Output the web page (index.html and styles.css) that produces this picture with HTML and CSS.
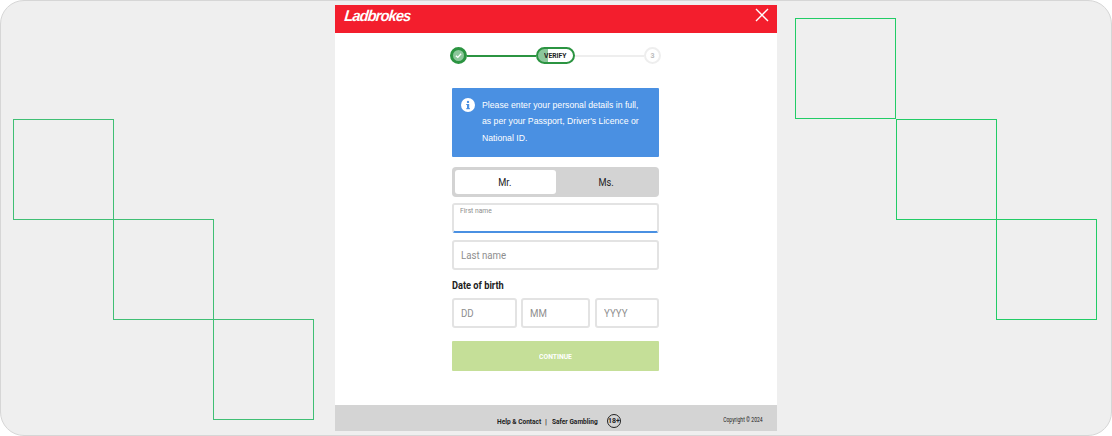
FILE: index.html
```html
<!DOCTYPE html>
<html lang="en">
<head>
    <meta charset="UTF-8">
    <meta name="viewport" content="width=device-width, initial-scale=1.0">
    <title>Ladbrokes - Verify</title>
    <link rel="stylesheet" href="styles.css">
</head>
<body>
    <div class="frame">
        <div class="square" style="left: 13px; top: 119px;"></div>
        <div class="square" style="left: 113px; top: 219px;"></div>
        <div class="square" style="left: 213px; top: 319px;"></div>
        <div class="square bright" style="left: 795px; top: 18px;"></div>
        <div class="square bright" style="left: 896px; top: 119px;"></div>
        <div class="square bright" style="left: 996px; top: 219px;"></div>

        <div class="modal">
            <header class="modal-header">
                <span class="logo">Ladbrokes</span>
                <svg class="close" width="14" height="14" viewBox="0 0 14 14">
                    <path d="M1 1L13 13M13 1L1 13" stroke="#fff" stroke-width="1.4" fill="none"/>
                </svg>
            </header>

            <div class="stepper">
                <div class="step-done">
                    <svg width="7" height="7" viewBox="0 0 8 8">
                        <path d="M1 4.2L3.2 6.2L7 2" stroke="#fff" stroke-width="1.5" fill="none"/>
                    </svg>
                </div>
                <div class="line line-done"></div>
                <div class="step-current"><span class="narrow">VERIFY</span></div>
                <div class="line"></div>
                <div class="step-next">3</div>
            </div>

            <div class="form">
                <div class="info-box">
                    <svg class="info-icon" width="14" height="14" viewBox="0 0 14 14">
                        <circle cx="7" cy="7" r="7" fill="#fff"/>
                        <rect x="6" y="6" width="2.2" height="5" fill="#4a90e2"/>
                        <rect x="5.2" y="6" width="2" height="1" fill="#4a90e2"/>
                        <rect x="5.2" y="10.2" width="3.8" height="1" fill="#4a90e2"/>
                        <circle cx="7" cy="3.9" r="1.2" fill="#4a90e2"/>
                    </svg>
                    <p>Please enter your personal details in full, as per your Passport, Driver's Licence or National ID.</p>
                </div>

                <div class="toggle">
                    <div class="toggle-item active"><span class="narrow">Mr.</span></div>
                    <div class="toggle-item"><span class="narrow">Ms.</span></div>
                </div>

                <div class="input focused">
                    <span class="float-label">First name</span>
                </div>
                <div class="input"><span class="narrow">Last name</span></div>

                <div class="dob-label"><span class="narrow">Date of birth</span></div>
                <div class="dob">
                    <div class="input dd"><span class="narrow">DD</span></div>
                    <div class="input mm"><span class="narrow">MM</span></div>
                    <div class="input yyyy"><span class="narrow">YYYY</span></div>
                </div>

                <button class="continue"><span class="narrow">CONTINUE</span></button>
            </div>

            <footer class="modal-footer">
                <span class="help">Help &amp; Contact</span>
                <span class="sep">|</span>
                <span class="safer">Safer Gambling</span>
                <span class="age">18+</span>
                <span class="copyright">Copyright © 2024</span>
            </footer>
        </div>
    </div>
</body>
</html>
```

FILE: styles.css
```css
* {
    box-sizing: border-box;
}
body {
    margin: 0;
    font-family: Roboto, sans-serif;
    overflow: hidden;
}
/* no condensed font installed, squeeze Roboto instead */
.narrow {
    display: inline-block;
    transform: scaleX(0.84);
}
.frame {
    position: relative;
    width: 1112px;
    height: 436px;
    background: #efefef;
    border: 1px solid #d6d6d6;
    border-radius: 24px;
    padding-top: 4px;
    display: flex;
    justify-content: center;
}
.square {
    position: absolute;
    width: 101px;
    height: 101px;
    margin: -1px 0 0 -1px;
    border: 1px solid #3fbf74;
}
.square.bright {
    border-color: #22cc66;
}
.modal {
    width: 442px;
    height: 426px;
    background: #fff;
    display: flex;
    flex-direction: column;
}
.modal-header {
    height: 28px;
    flex: none;
    background: #f31e2d;
    display: flex;
    justify-content: space-between;
    padding: 3px 8px 0 9px;
}
.logo {
    font-family: "Liberation Sans", sans-serif;
    font-size: 15.5px;
    line-height: 15px;
    font-style: italic;
    font-weight: bold;
    letter-spacing: -0.9px;
    color: #fff;
    transform: scaleX(0.94) skewX(-6deg);
    transform-origin: left;
}
.stepper {
    display: flex;
    align-items: center;
    margin: 14px 0 0 115px;
    width: 211px;
    height: 17px;
}
.step-done {
    width: 17px;
    height: 17px;
    flex: none;
    border-radius: 50%;
    background: #8cc79b;
    border: 3px solid #2b9441;
    display: flex;
    align-items: center;
    justify-content: center;
}
.line {
    flex: 1;
    height: 2px;
    background: #eee;
}
.line-done {
    background: #2b9441;
}
.step-current {
    width: 39px;
    height: 17px;
    flex: none;
    border: 2px solid #2b9441;
    border-radius: 9px;
    background: linear-gradient(to right, #8cc79b 0, #8cc79b 10px, #fff 10px);
    display: flex;
    align-items: center;
    justify-content: center;
    font-size: 8px;
    font-weight: bold;
    color: #222;
}
.step-next {
    width: 17px;
    height: 17px;
    flex: none;
    border: 2px solid #eee;
    border-radius: 50%;
    display: flex;
    align-items: center;
    justify-content: center;
    font-size: 7px;
    font-weight: bold;
    color: #bbb;
}
.form {
    width: 207px;
    margin: 24px 0 0 117px;
    display: flex;
    flex-direction: column;
}
.info-box {
    height: 69px;
    background: #4a90e2;
    border-radius: 1px;
    padding: 9px 0 0 9px;
    display: flex;
    gap: 7px;
    color: #fff;
}
.info-box p {
    width: 162px;
    margin: 0;
    font-family: "Liberation Sans", sans-serif;
    font-size: 8.7px;
    line-height: 16.3px;
}
.info-icon {
    flex: none;
    margin-top: 1px;
}
.toggle {
    height: 30px;
    margin-top: 10px;
    background: #d3d3d3;
    border-radius: 4px;
    padding: 3px;
    display: flex;
}
.toggle-item {
    flex: 1;
    display: flex;
    align-items: center;
    justify-content: center;
    font-size: 11px;
    color: #222;
}
.toggle-item.active {
    background: #fff;
    border-radius: 3px;
}
.input {
    position: relative;
    height: 30px;
    margin-top: 7px;
    border: 2px solid #e3e3e3;
    border-radius: 3px;
    padding-left: 7px;
    display: flex;
    align-items: center;
    font-size: 11.5px;
    color: #8e8e8e;
}
.input .narrow {
    transform-origin: left;
}
.input.focused {
    margin-top: 6px;
    border-bottom-color: #4a90e2;
}
.float-label {
    position: absolute;
    left: 6px;
    top: 1px;
    font-size: 8px;
    transform: scaleX(0.84);
    transform-origin: left;
}
.dob-label {
    margin-top: 9px;
    font-size: 11px;
    font-weight: bold;
    color: #222;
    line-height: 13px;
}
.dob-label .narrow {
    transform-origin: left;
}
.dob {
    display: flex;
    gap: 4px;
    margin-top: 6px;
}
.dob .input {
    margin-top: 0;
}
.dd {
    width: 65px;
}
.mm {
    width: 69px;
}
.yyyy {
    width: 64px;
    margin-left: 1px;
}
.continue {
    height: 30px;
    margin-top: 13px;
    background: #c5df98;
    border: none;
    border-radius: 1px;
    font-family: inherit;
    font-size: 8px;
    font-weight: bold;
    color: #fff;
}
.modal-footer {
    height: 26px;
    margin-top: auto;
    background: #d4d4d4;
    position: relative;
    display: flex;
    align-items: center;
    padding: 7px 0 0 162px;
    font-size: 8px;
    font-weight: bold;
    color: #222;
}
.help,
.safer {
    white-space: nowrap;
    transform: scaleX(0.82);
    transform-origin: left;
}
.help {
    width: 44px;
}
.safer {
    width: 45px;
}
.sep {
    margin: 0 5px 0 4px;
    font-weight: normal;
}
.age {
    width: 14px;
    height: 14px;
    margin: -1px 0 0 10px;
    border: 1.5px solid #222;
    border-radius: 50%;
    font-size: 7px;
    display: flex;
    align-items: center;
    justify-content: center;
}
.copyright {
    position: absolute;
    right: 14px;
    top: 11px;
    font-size: 6.5px;
    font-weight: normal;
    transform: scaleX(0.78);
    transform-origin: right;
}
```
